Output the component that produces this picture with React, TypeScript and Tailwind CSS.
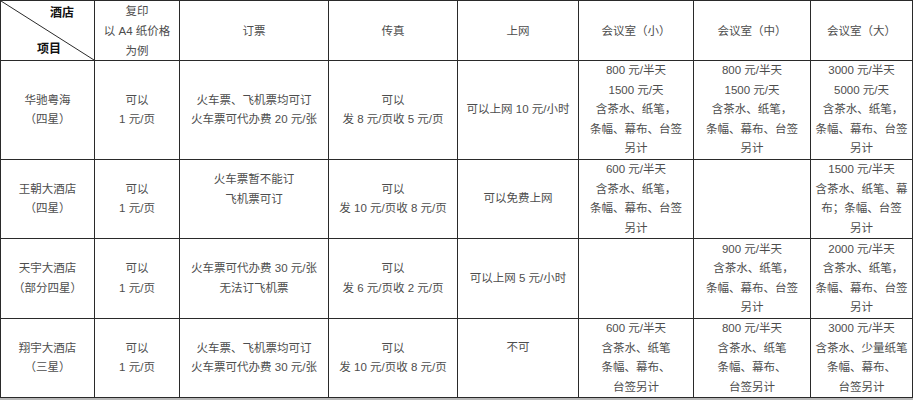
import React from "react";

type Cell = {
  lines: string[];
  align?: "center" | "top" | "raised";
};

const header = [
  ["复印", "以 A4 纸价格", "为例"],
  ["订票"],
  ["传真"],
  ["上网"],
  ["会议室（小）"],
  ["会议室（中）"],
  ["会议室（大）"],
];

const rows: Cell[][] = [
  [
    { lines: ["华驰粤海", "（四星）"] },
    { lines: ["可以", "1 元/页"] },
    { lines: ["火车票、飞机票均可订", "火车票可代办费 20 元/张"] },
    { lines: ["可以", "发 8 元/页收 5 元/页"] },
    { lines: ["可以上网 10 元/小时"] },
    { lines: ["800 元/半天", "1500 元/天", "含茶水、纸笔，", "条幅、幕布、台签", "另计"] },
    { lines: ["800 元/半天", "1500 元/天", "含茶水、纸笔，", "条幅、幕布、台签", "另计"] },
    { lines: ["3000 元/半天", "5000 元/天", "\u00a0含茶水、纸笔，", "条幅、幕布、台签", "另计"] },
  ],
  [
    { lines: ["王朝大酒店", "（四星）"] },
    { lines: ["可以", "1 元/页"] },
    { lines: ["火车票暂不能订", "飞机票可订"], align: "top" },
    { lines: ["可以", "发 10 元/页收 8 元/页"] },
    { lines: ["可以免费上网"] },
    { lines: ["600 元/半天", "含茶水、纸笔，", "条幅、幕布、台签", "另计"] },
    { lines: [] },
    { lines: ["1500 元/半天", "含茶水、纸笔、幕", "布；条幅、台签", "另计"] },
  ],
  [
    { lines: ["天宇大酒店", "（部分四星）"] },
    { lines: ["可以", "1 元/页"] },
    { lines: ["火车票可代办费 30 元/张", "无法订飞机票"] },
    { lines: ["可以", "发 6 元/页收 2 元/页"] },
    { lines: ["可以上网 5 元/小时"] },
    { lines: [] },
    { lines: ["900 元/半天", "\u00a0含茶水、纸笔，", "条幅、幕布、台签", "另计"] },
    { lines: ["2000 元/半天", "\u00a0含茶水、纸笔，", "条幅、幕布、台签", "另计"] },
  ],
  [
    { lines: ["翔宇大酒店", "（三星）"] },
    { lines: ["可以", "1 元/页"] },
    { lines: ["火车票、飞机票均可订", "火车票可代办费 30 元/张"] },
    { lines: ["可以", "发 10 元/页收 8 元/页"] },
    { lines: ["不可"], align: "raised" },
    { lines: ["600 元/半天", "含茶水、纸笔", "条幅、幕布、", "台签另计"] },
    { lines: ["800 元/半天", "含茶水、纸笔", "条幅、幕布、", "台签另计"] },
    { lines: ["3000 元/半天", "含茶水、少量纸笔", "条幅、幕布、", "台签另计"] },
  ],
];

function TextCell({ cell }: { cell: Cell }) {
  const pos =
    cell.align === "top"
      ? "justify-start pt-[10px]"
      : cell.align === "raised"
      ? "justify-center pb-[20px]"
      : "justify-center";
  return (
    <div className={`bg-white flex flex-col items-center ${pos} leading-[19.5px]`}>
      {cell.lines.map((l, i) => (
        <span key={i} className="whitespace-pre">
          {l}
        </span>
      ))}
    </div>
  );
}

export default function App() {
  return (
    <div
      className="w-[913px] h-[400px] bg-[#b8b8b8] text-[11.5px] text-[#4d4d4d]"
      style={{ fontFamily: '"Liberation Sans", "Noto Sans CJK SC", sans-serif' }}
    >
      <div className="grid grid-cols-[93px_84px_148px_128px_120px_114px_116px_101px] grid-rows-[59px_98px_78px_79px_78px] gap-px p-px bg-[#2a2a2a]">
        {/* corner cell with diagonal */}
        <div className="bg-white relative flex flex-col justify-between pt-[3px] pb-[2px] text-[12px] font-bold text-[#111]">
          <svg className="absolute inset-0 w-full h-full" viewBox="0 0 93 59" preserveAspectRatio="none">
            <line x1="0" y1="0" x2="93" y2="59" stroke="#2a2a2a" strokeWidth="1" />
          </svg>
          <span className="self-end pr-[20px]">酒店</span>
          <span className="pl-[36px]">项目</span>
        </div>
        {header.map((h, i) => (
          <div key={i} className="bg-white flex flex-col items-center justify-center leading-[20px]">
            {h.map((l, j) => (
              <span key={j} className="whitespace-pre">
                {l}
              </span>
            ))}
          </div>
        ))}
        {rows.map((r, ri) => r.map((c, ci) => <TextCell key={`${ri}-${ci}`} cell={c} />))}
      </div>
    </div>
  );
}
